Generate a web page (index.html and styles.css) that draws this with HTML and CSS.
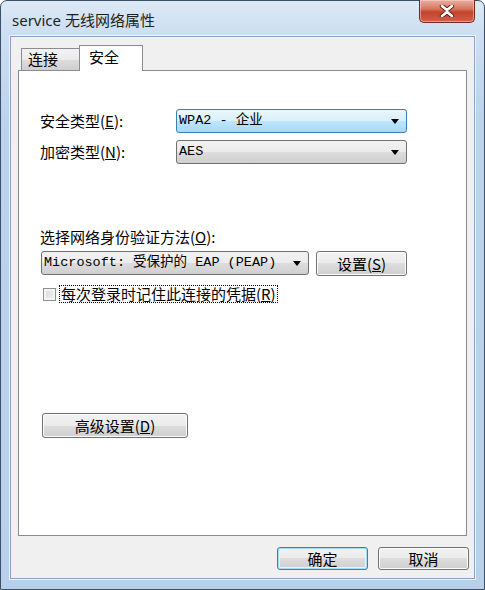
FILE: index.html
```html
<!DOCTYPE html>
<html lang="zh-CN">
<head>
    <meta charset="UTF-8">
    <title>service 无线网络属性</title>
    <link rel="stylesheet" href="styles.css">
</head>
<body>

<div class="window">
    <!-- Pasek tytułu -->
    <div class="titlebar">
        <div class="title">service 无线网络属性</div>
        <div class="close-button">
            <svg width="16" height="12" viewBox="0 0 16 12">
                <path d="M3 1 L8 5 L13 1 M3 11 L8 7 L13 11" stroke="#5a1a10" stroke-width="4.4" fill="none" stroke-linecap="round"/>
                <path d="M3 1 L8 5 L13 1 M3 11 L8 7 L13 11" stroke="#ffffff" stroke-width="2.6" fill="none" stroke-linecap="round"/>
            </svg>
        </div>
    </div>

    <div class="client">
        <!-- Zakładki -->
        <div class="tabs">
            <div class="tab">连接</div>
            <div class="tab selected">安全</div>
        </div>

        <div class="panel">
            <div class="form-grid">
                <div class="label">安全类型(<u>E</u>):</div>
                <div class="combo focused">
                    <span class="combo-text">WPA2 - 企业</span>
                    <span class="arrow"></span>
                </div>
                <div class="label">加密类型(<u>N</u>):</div>
                <div class="combo">
                    <span class="combo-text">AES</span>
                    <span class="arrow"></span>
                </div>
            </div>

            <div class="auth">
                <div class="label">选择网络身份验证方法(<u>O</u>):</div>
                <div class="auth-row">
                    <div class="combo wide">
                        <span class="combo-text">Microsoft: 受保护的 EAP (PEAP)</span>
                        <span class="arrow"></span>
                    </div>
                    <button class="btn settings">设置(<u>S</u>)</button>
                </div>
                <div class="check-row">
                    <span class="checkbox"></span>
                    <span class="check-label">每次登录时记住此连接的凭据(<u>R</u>)</span>
                </div>
            </div>

            <button class="btn advanced">高级设置(<u>D</u>)</button>
        </div>

        <!-- Przyciski na dole -->
        <div class="footer">
            <button class="btn default">确定</button>
            <button class="btn">取消</button>
        </div>
    </div>
</div>

</body>
</html>
```

FILE: styles.css
```css
body {
    margin: 0;
    background-color: #ffffff;
    font-family: "Noto Sans CJK SC", sans-serif;
    font-size: 15px;
    color: #000;
}

.window {
    width: 485px;
    height: 590px;
    box-sizing: border-box;
    border: 1px solid #3b4f66;
    border-radius: 7px 7px 0 0;
    background: linear-gradient(to bottom, #dde9f6 0, #cddff2 30px, #bcd3ec 120px, #b9d0ea 100%);
    padding: 0 9px 10px 9px;
    display: flex;
    flex-direction: column;
}

.titlebar {
    height: 35px;
    display: flex;
    justify-content: space-between;
    align-items: flex-start;
}

.title {
    font-family: "Noto Sans", "Noto Sans CJK SC", sans-serif;
    font-size: 15px;
    line-height: 20px;
    padding: 9px 0 0 2px;
    color: #1e1e1e;
}

.close-button {
    width: 56px;
    height: 23px;
    margin-top: -1px;
    box-sizing: border-box;
    border: 1px solid #6e2a1f;
    border-top: none;
    border-radius: 0 0 5px 5px;
    background: linear-gradient(to bottom, #eab0a2 0, #d87760 40%, #c5432a 55%, #d2604a 100%);
    box-shadow: inset 0 0 0 1px rgba(255, 220, 210, 0.5);
    display: flex;
    align-items: center;
    justify-content: center;
}

.client {
    flex: 1;
    background-color: #f0f0f0;
    border: 1px solid #8da3bd;
    box-shadow: 0 0 0 1px #eef4fb;
    padding: 8px 7px 0 7px;
    display: flex;
    flex-direction: column;
}

.tabs {
    display: flex;
    align-items: flex-end;
    padding-left: 3px;
    height: 25px;
    position: relative;
    z-index: 1;
}

.tab {
    width: 58px;
    height: 22px;
    box-sizing: border-box;
    border: 1px solid #898c95;
    border-bottom: none;
    border-right: none;
    background: linear-gradient(to bottom, #f2f2f2, #ebebeb 50%, #dddddd 50%, #cfcfcf);
    line-height: 20px;
    padding-left: 6px;
}

.tab.selected {
    width: 64px;
    height: 26px;
    margin-bottom: -1px;
    border-right: 1px solid #898c95;
    background: #ffffff;
    padding-left: 9px;
    line-height: 22px;
}

.panel {
    height: 466px;
    box-sizing: border-box;
    background-color: #ffffff;
    border: 1px solid #898c95;
    padding: 38px 0 0 21px;
}

.label {
    line-height: 16px;
}

.form-grid {
    display: grid;
    grid-template-columns: 136px 231px;
    row-gap: 7px;
    align-items: center;
}

.combo {
    height: 24px;
    box-sizing: border-box;
    border: 1px solid #707070;
    border-radius: 3px;
    background: linear-gradient(to bottom, #f2f2f2, #ebebeb 50%, #dddddd 50%, #cfcfcf);
    display: flex;
    align-items: center;
    justify-content: space-between;
    padding: 0 7px 0 2px;
}

.combo.focused {
    border-color: #3c7fb1;
    background: linear-gradient(to bottom, #eaf6fd, #d9f0fc 50%, #bee6fd 50%, #a7d9f5);
}

.combo-text {
    font-family: "Liberation Mono", "Noto Sans CJK SC", monospace;
    font-size: 13.5px;
    line-height: 18px;
    white-space: nowrap;
}

.arrow {
    width: 0;
    height: 0;
    border-left: 4px solid transparent;
    border-right: 4px solid transparent;
    border-top: 5px solid #000;
}

.auth {
    margin-top: 65px;
}

.auth-row {
    display: flex;
    gap: 7px;
    margin-top: 6px;
}

.combo.wide {
    width: 268px;
    margin-left: 1px;
}

.btn {
    font-family: "Noto Sans CJK SC", sans-serif;
    font-size: 15px;
    color: #000;
    height: 25px;
    box-sizing: border-box;
    border: 1px solid #707070;
    border-radius: 3px;
    background: linear-gradient(to bottom, #f2f2f2, #ebebeb 50%, #dddddd 50%, #cfcfcf);
    box-shadow: inset 0 0 0 1px #fcfcfc;
    padding: 0;
    line-height: 20px;
}

.btn.settings {
    width: 91px;
}

.check-row {
    display: flex;
    align-items: center;
    margin-top: 9px;
    padding-left: 3px;
}

.checkbox {
    width: 13px;
    height: 13px;
    box-sizing: border-box;
    border: 1px solid #8f8f8f;
    background: linear-gradient(135deg, #d8d8d8, #f4f4f4);
    box-shadow: inset 0 0 0 2px #f4f4f4;
}

.check-label {
    margin-left: 3px;
    border: 1px dotted #000;
    padding: 0 1px;
    line-height: 16px;
}

.btn.advanced {
    display: block;
    width: 146px;
    margin: 110px 0 0 2px;
}

.footer {
    display: flex;
    justify-content: flex-end;
    gap: 10px;
    margin: 11px -2px 0 0;
}

.footer .btn {
    width: 91px;
    height: 23px;
}

.btn.default {
    border-color: #3c7fb1;
    box-shadow: inset 0 0 0 1px #a6dcf6, inset 0 0 0 2px #e3f4fc;
}
```
